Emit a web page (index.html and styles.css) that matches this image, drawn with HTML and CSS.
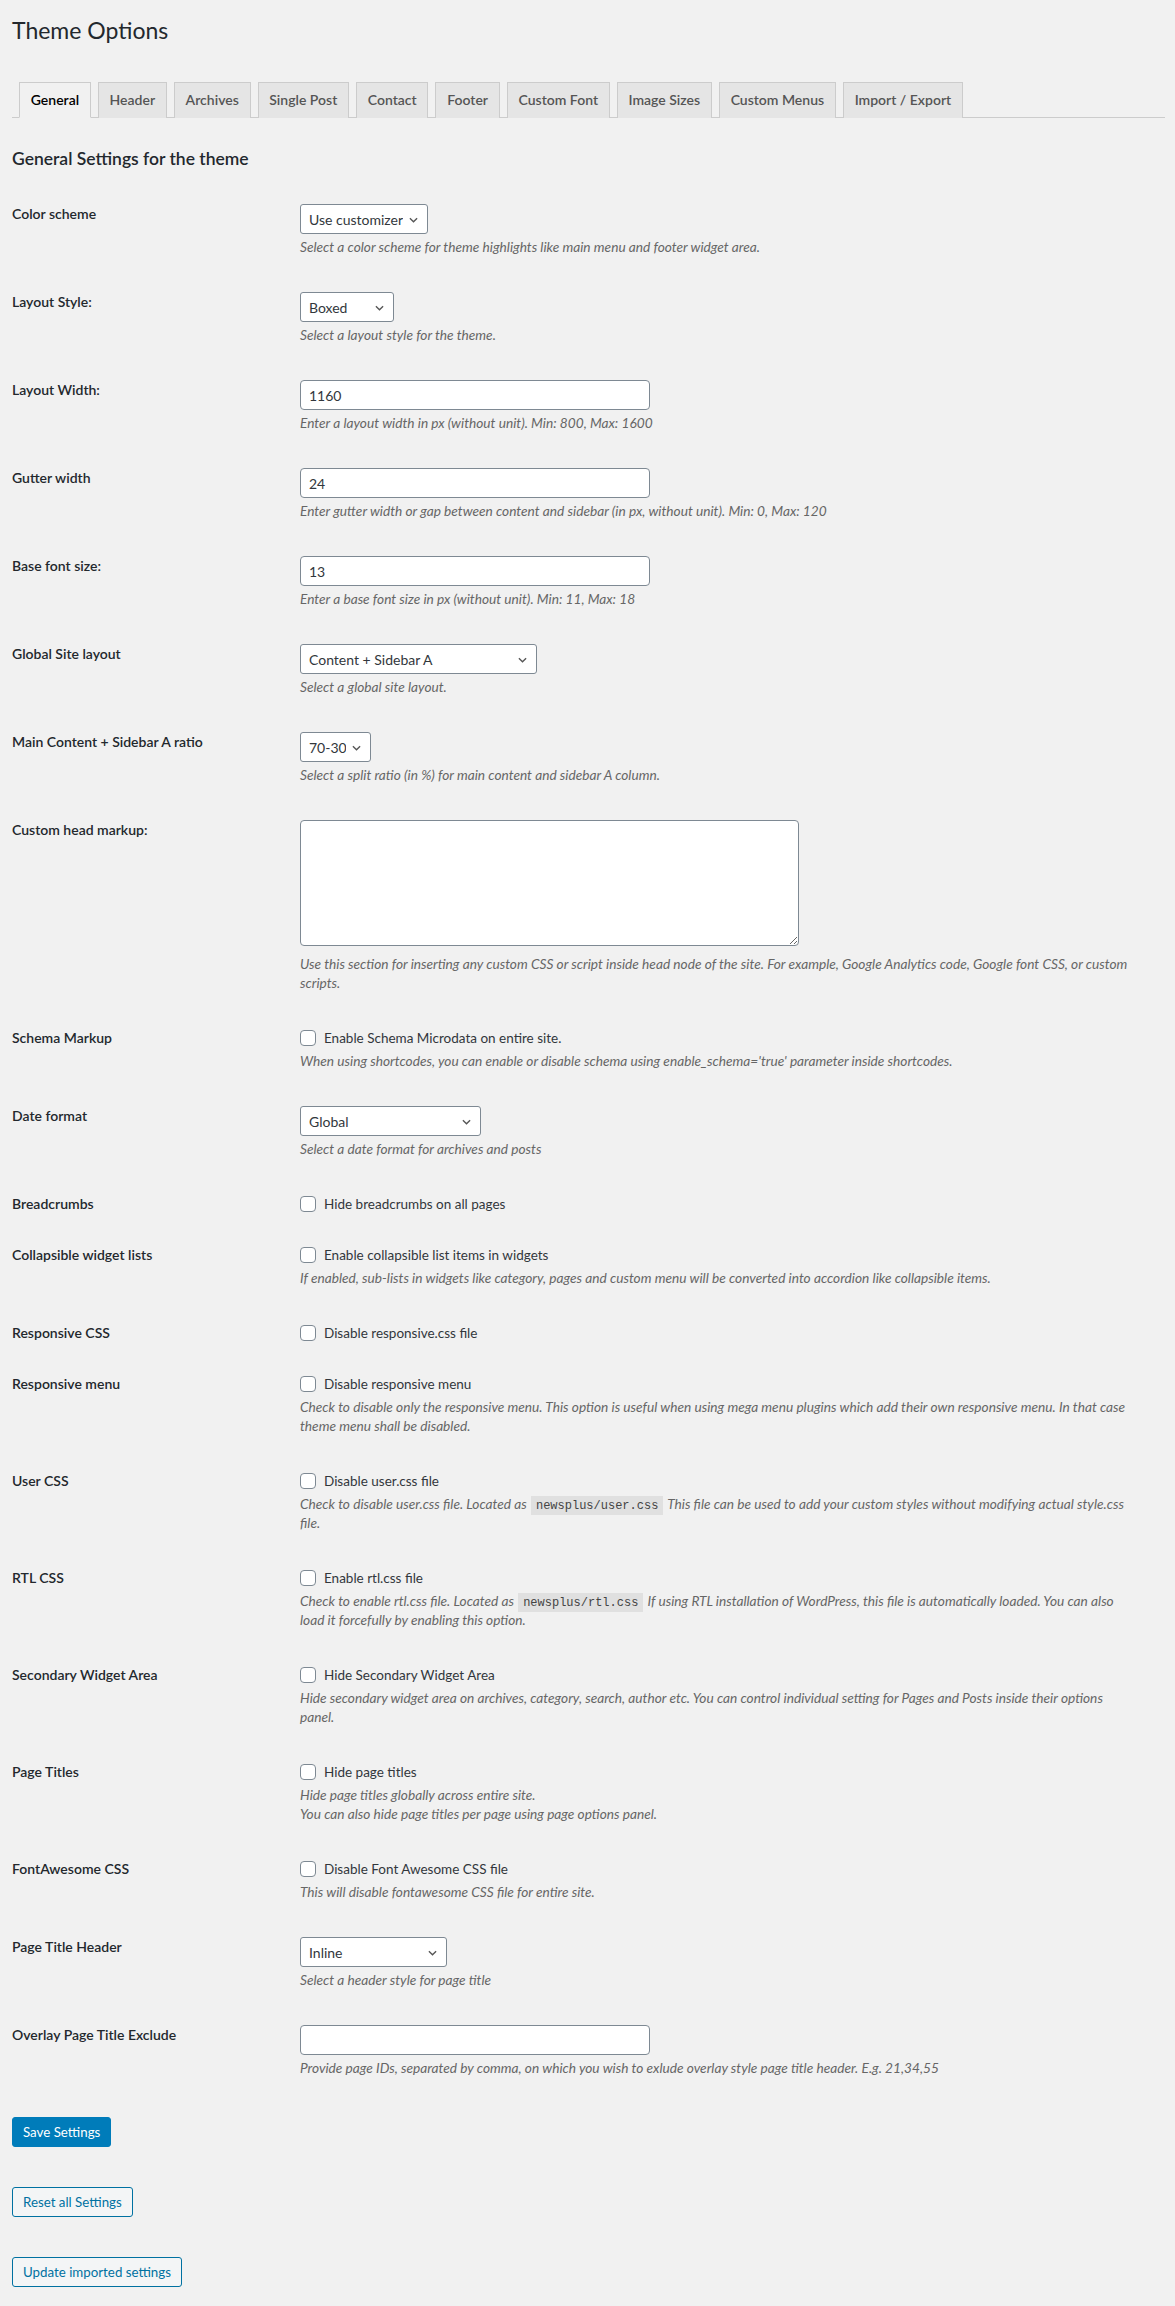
FILE: index.html
```html
<!DOCTYPE html>
<html lang="en">
<head>
    <meta charset="UTF-8">
    <meta name="viewport" content="width=device-width, initial-scale=1.0">
    <title>Theme Options</title>
    <link rel="stylesheet" href="styles.css">
</head>
<body>
    <div class="wrap">
        <h1 class="page-title">Theme Options</h1>

        <nav class="nav-tabs">
            <a href="#" class="nav-tab active">General</a>
            <a href="#" class="nav-tab">Header</a>
            <a href="#" class="nav-tab">Archives</a>
            <a href="#" class="nav-tab">Single Post</a>
            <a href="#" class="nav-tab">Contact</a>
            <a href="#" class="nav-tab">Footer</a>
            <a href="#" class="nav-tab">Custom Font</a>
            <a href="#" class="nav-tab">Image Sizes</a>
            <a href="#" class="nav-tab">Custom Menus</a>
            <a href="#" class="nav-tab">Import / Export</a>
        </nav>

        <form class="options-form" action="#" method="post">
            <h2 class="section-title">General Settings for the theme</h2>

            <div class="settings">
                <div class="field-row">
                    <label class="field-label" for="color_scheme">Color scheme</label>
                    <div class="field">
                        <span class="select-wrap">
                            <select id="color_scheme" class="sel-scheme">
                                <option>Use customizer</option>
                            </select>
                            <svg class="chevron" viewBox="0 0 10 6"><path d="M1 1l4 4 4-4"/></svg>
                        </span>
                        <p class="description">Select a color scheme for theme highlights like main menu and footer widget area.</p>
                    </div>
                </div>

                <div class="field-row">
                    <label class="field-label" for="layout_style">Layout Style:</label>
                    <div class="field">
                        <span class="select-wrap">
                            <select id="layout_style" class="sel-layout">
                                <option>Boxed</option>
                            </select>
                            <svg class="chevron" viewBox="0 0 10 6"><path d="M1 1l4 4 4-4"/></svg>
                        </span>
                        <p class="description">Select a layout style for the theme.</p>
                    </div>
                </div>

                <div class="field-row">
                    <label class="field-label" for="layout_width">Layout Width:</label>
                    <div class="field">
                        <input type="text" id="layout_width" class="regular-text" value="1160">
                        <p class="description">Enter a layout width in px (without unit). Min: 800, Max: 1600</p>
                    </div>
                </div>

                <div class="field-row">
                    <label class="field-label" for="gutter">Gutter width</label>
                    <div class="field">
                        <input type="text" id="gutter" class="regular-text" value="24">
                        <p class="description">Enter gutter width or gap between content and sidebar (in px, without unit). Min: 0, Max: 120</p>
                    </div>
                </div>

                <div class="field-row">
                    <label class="field-label" for="base_font">Base font size:</label>
                    <div class="field">
                        <input type="text" id="base_font" class="regular-text" value="13">
                        <p class="description">Enter a base font size in px (without unit). Min: 11, Max: 18</p>
                    </div>
                </div>

                <div class="field-row">
                    <label class="field-label" for="site_layout">Global Site layout</label>
                    <div class="field">
                        <span class="select-wrap">
                            <select id="site_layout" class="sel-site">
                                <option>Content + Sidebar A</option>
                            </select>
                            <svg class="chevron" viewBox="0 0 10 6"><path d="M1 1l4 4 4-4"/></svg>
                        </span>
                        <p class="description">Select a global site layout.</p>
                    </div>
                </div>

                <div class="field-row">
                    <label class="field-label" for="ratio">Main Content + Sidebar A ratio</label>
                    <div class="field">
                        <span class="select-wrap">
                            <select id="ratio" class="sel-ratio">
                                <option>70-30</option>
                            </select>
                            <svg class="chevron" viewBox="0 0 10 6"><path d="M1 1l4 4 4-4"/></svg>
                        </span>
                        <p class="description">Select a split ratio (in %) for main content and sidebar A column.</p>
                    </div>
                </div>

                <div class="field-row">
                    <label class="field-label" for="head_markup">Custom head markup:</label>
                    <div class="field">
                        <textarea id="head_markup" class="large-text"></textarea>
                        <p class="description">Use this section for inserting any custom CSS or script inside head node of the site. For example, Google Analytics code, Google font CSS, or custom scripts.</p>
                    </div>
                </div>

                <div class="field-row">
                    <span class="field-label">Schema Markup</span>
                    <div class="field">
                        <label class="check"><input type="checkbox"> Enable Schema Microdata on entire site.</label>
                        <p class="description">When using shortcodes, you can enable or disable schema using enable_schema='true' parameter inside shortcodes.</p>
                    </div>
                </div>

                <div class="field-row">
                    <label class="field-label" for="date_format">Date format</label>
                    <div class="field">
                        <span class="select-wrap">
                            <select id="date_format" class="sel-date">
                                <option>Global</option>
                            </select>
                            <svg class="chevron" viewBox="0 0 10 6"><path d="M1 1l4 4 4-4"/></svg>
                        </span>
                        <p class="description">Select a date format for archives and posts</p>
                    </div>
                </div>

                <div class="field-row">
                    <span class="field-label">Breadcrumbs</span>
                    <div class="field">
                        <label class="check"><input type="checkbox"> Hide breadcrumbs on all pages</label>
                    </div>
                </div>

                <div class="field-row">
                    <span class="field-label">Collapsible widget lists</span>
                    <div class="field">
                        <label class="check"><input type="checkbox"> Enable collapsible list items in widgets</label>
                        <p class="description">If enabled, sub-lists in widgets like category, pages and custom menu will be converted into accordion like collapsible items.</p>
                    </div>
                </div>

                <div class="field-row">
                    <span class="field-label">Responsive CSS</span>
                    <div class="field">
                        <label class="check"><input type="checkbox"> Disable responsive.css file</label>
                    </div>
                </div>

                <div class="field-row">
                    <span class="field-label">Responsive menu</span>
                    <div class="field">
                        <label class="check"><input type="checkbox"> Disable responsive menu</label>
                        <p class="description">Check to disable only the responsive menu. This option is useful when using mega menu plugins which add their own responsive menu. In that case theme menu shall be disabled.</p>
                    </div>
                </div>

                <div class="field-row">
                    <span class="field-label">User CSS</span>
                    <div class="field">
                        <label class="check"><input type="checkbox"> Disable user.css file</label>
                        <p class="description">Check to disable user.css file. Located as <code>newsplus/user.css</code> This file can be used to add your custom styles without modifying actual style.css file.</p>
                    </div>
                </div>

                <div class="field-row">
                    <span class="field-label">RTL CSS</span>
                    <div class="field">
                        <label class="check"><input type="checkbox"> Enable rtl.css file</label>
                        <p class="description">Check to enable rtl.css file. Located as <code>newsplus/rtl.css</code> If using RTL installation of WordPress, this file is automatically loaded. You can also load it forcefully by enabling this option.</p>
                    </div>
                </div>

                <div class="field-row">
                    <span class="field-label">Secondary Widget Area</span>
                    <div class="field">
                        <label class="check"><input type="checkbox"> Hide Secondary Widget Area</label>
                        <p class="description">Hide secondary widget area on archives, category, search, author etc. You can control individual setting for Pages and Posts inside their options panel.</p>
                    </div>
                </div>

                <div class="field-row">
                    <span class="field-label">Page Titles</span>
                    <div class="field">
                        <label class="check"><input type="checkbox"> Hide page titles</label>
                        <p class="description">Hide page titles globally across entire site.<br>You can also hide page titles per page using page options panel.</p>
                    </div>
                </div>

                <div class="field-row">
                    <span class="field-label">FontAwesome CSS</span>
                    <div class="field">
                        <label class="check"><input type="checkbox"> Disable Font Awesome CSS file</label>
                        <p class="description">This will disable fontawesome CSS file for entire site.</p>
                    </div>
                </div>

                <div class="field-row">
                    <label class="field-label" for="title_header">Page Title Header</label>
                    <div class="field">
                        <span class="select-wrap">
                            <select id="title_header" class="sel-header">
                                <option>Inline</option>
                            </select>
                            <svg class="chevron" viewBox="0 0 10 6"><path d="M1 1l4 4 4-4"/></svg>
                        </span>
                        <p class="description">Select a header style for page title</p>
                    </div>
                </div>

                <div class="field-row">
                    <label class="field-label" for="overlay_exclude">Overlay Page Title Exclude</label>
                    <div class="field">
                        <input type="text" id="overlay_exclude" class="regular-text" value="">
                        <p class="description">Provide page IDs, separated by comma, on which you wish to exlude overlay style page title header. E.g. 21,34,55</p>
                    </div>
                </div>
            </div>

            <div class="actions">
                <button type="submit" class="button button-primary">Save Settings</button>
                <button type="button" class="button">Reset all Settings</button>
                <button type="button" class="button">Update imported settings</button>
            </div>
        </form>
    </div>
</body>
</html>
```

FILE: styles.css
```css
* {
    margin: 0;
    padding: 0;
    box-sizing: border-box;
}

body {
    font-family: 'Lato', 'Open Sans', sans-serif;
    font-size: 13px;
    background-color: #f1f1f1;
    color: #444;
    width: 1175px;
    min-height: 2306px;
}

.wrap {
    margin: 0 10px 0 12px;
}

.page-title {
    margin-top: 15px;
    font-size: 23px;
    font-weight: 400;
    line-height: 30px;
    color: #23282d;
}

/* tabs */

.nav-tabs {
    display: flex;
    margin-top: 37px;
    border-bottom: 1px solid #ccc;
}

.nav-tab {
    margin-left: 7px;
    margin-bottom: -1px;
    padding: 5px 10.75px;
    border: 1px solid #ccc;
    border-bottom: none;
    background-color: #e5e5e5;
    color: #555;
    font-size: 14px;
    font-weight: 600;
    line-height: 24px;
    text-decoration: none;
}

.nav-tab.active {
    background-color: #f1f1f1;
    border-bottom: 1px solid #f1f1f1;
    color: #000;
}

/* settings */

.section-title {
    margin: 30px 0 18px;
    font-size: 17.5px;
    font-weight: 600;
    line-height: 22px;
    color: #23282d;
}

.field-row {
    display: grid;
    grid-template-columns: 288px 1fr;
    padding: 16px 0 15px;
}

.field-label {
    font-size: 14px;
    font-weight: 600;
    line-height: 20px;
    color: #23282d;
}

.field {
    max-width: 830px;
    font-size: 14px;
    color: #32373c;
}

.description {
    margin: 3px 0 5px;
    font-size: 13.7px;
    font-style: italic;
    line-height: 19px;
    color: #666;
}

.description code {
    padding: 3px 5px 2px;
    margin: 0 1px;
    background-color: rgba(0, 0, 0, 0.07);
    font-family: 'Liberation Mono', monospace;
    font-size: 12px;
    font-style: normal;
    line-height: 1;
    color: #444;
}

.select-wrap {
    position: relative;
    display: inline-block;
    vertical-align: top;
}

.select-wrap select {
    display: block;
    height: 30px;
    padding: 0 24px 0 8px;
    border: 1px solid #7e8993;
    border-radius: 3px;
    background-color: #fff;
    color: #32373c;
    font-family: inherit;
    font-size: 14px;
    -webkit-appearance: none;
    appearance: none;
}

.chevron {
    position: absolute;
    right: 10px;
    top: 13px;
    width: 9px;
    height: 6px;
    fill: none;
    stroke: #555;
    stroke-width: 1.5;
    pointer-events: none;
}

.sel-scheme { width: 128px; }
.sel-layout { width: 94px; }
.sel-site { width: 237px; }
.sel-ratio { width: 71px; }
.sel-date { width: 181px; }
.sel-header { width: 147px; }

.regular-text {
    display: block;
    width: 350px;
    height: 30px;
    padding: 0 8px;
    border: 1px solid #7e8993;
    border-radius: 4px;
    background-color: #fff;
    color: #32373c;
    font-family: inherit;
    font-size: 14px;
}

.large-text {
    display: block;
    width: 499px;
    height: 126px;
    margin-bottom: 8px;
    border: 1px solid #7e8993;
    border-radius: 4px;
    background-color: #fff;
    font-family: inherit;
}

.check {
    display: flex;
    align-items: center;
    gap: 8px;
    height: 20px;
    font-size: 13.5px;
    line-height: 20px;
}

.check input {
    width: 16px;
    height: 16px;
    border: 1px solid #7e8993;
    border-radius: 4px;
    background-color: #fff;
    -webkit-appearance: none;
    appearance: none;
}

/* buttons */

.actions {
    display: flex;
    flex-direction: column;
    align-items: flex-start;
    gap: 40px;
    margin-top: 20px;
}

.button {
    height: 30px;
    padding: 0 10px;
    border: 1px solid #0071a1;
    border-radius: 3px;
    background-color: #f3f5f6;
    color: #0071a1;
    font-family: inherit;
    font-size: 13.3px;
    line-height: 28px;
}

.button-primary {
    background-color: #007cba;
    border-color: #007cba;
    color: #fff;
}
```
